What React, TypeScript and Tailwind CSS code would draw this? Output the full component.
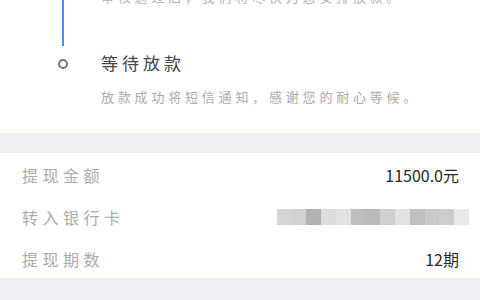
import React from "react";

const font = { fontFamily: '"Noto Sans CJK SC", "Noto Sans", sans-serif' };

const blocks = [
  "bg-[#d6d6d6]",
  "bg-[#d2d2d2]",
  "bg-[#b2b2b2]",
  "bg-[#dcdcdc]",
  "bg-[#e2e2e2]",
  "bg-[#bebebe]",
  "bg-[#b9b9b9]",
  "bg-[#d0d0d0]",
  "bg-[#e2e2e2]",
  "bg-[#bfbfbf]",
  "bg-[#c8c8c8]",
  "bg-[#cdcdcd]",
  "bg-[#e9e9e9]",
];

function Row({ label, children }: { label: string; children: React.ReactNode }) {
  return (
    <div className="flex items-center justify-between h-[22px]">
      <span className="text-[16px] leading-[22px] tracking-[4.5px] text-[#ababab]">{label}</span>
      {children}
    </div>
  );
}

export default function App() {
  return (
    <div className="w-[480px] h-[300px] bg-[#efeff4] overflow-hidden" style={font}>
      <div className="bg-white h-[133px] flex overflow-hidden">
        <div className="ml-[58px] w-[10px] flex flex-col items-center">
          <div className="w-[2px] h-[46px] bg-[#4a90e2]" />
          <div className="mt-[13px] w-[10px] h-[10px] rounded-full border-2 border-[#777777]" />
        </div>
        <div className="ml-[33px] flex flex-col">
          <div className="-mt-[13px] text-[13px] leading-[20px] tracking-[3.8px] text-[#b5b5b5] whitespace-nowrap">
            审核通过后，我们将尽快为您安排放款。
          </div>
          <div className="mt-[44px] text-[17px] leading-[24px] tracking-[4px] text-[#44444c]">
            等待放款
          </div>
          <div className="mt-[12px] text-[13px] leading-[20px] tracking-[3.8px] text-[#ababab] whitespace-nowrap">
            放款成功将短信通知，感谢您的耐心等候。
          </div>
        </div>
      </div>
      <div className="h-[20px]" />
      <div className="bg-white h-[125px] pt-[11px] pl-[22px] pr-[21px] flex flex-col gap-[20px]">
        <Row label="提现金额">
          <span className="text-[16px] leading-[22px] text-[#2a2a2a]">11500.0元</span>
        </Row>
        <Row label="转入银行卡">
          <div className="-mr-[10px] flex flex-col">
            <div className="flex">
              {blocks.map((c, i) => (
                <div key={i} className={`w-[14.8px] h-[16px] ${c}`} />
              ))}
            </div>
          </div>
        </Row>
        <Row label="提现期数">
          <span className="text-[16px] leading-[22px] text-[#2a2a2a]">12期</span>
        </Row>
      </div>
    </div>
  );
}
